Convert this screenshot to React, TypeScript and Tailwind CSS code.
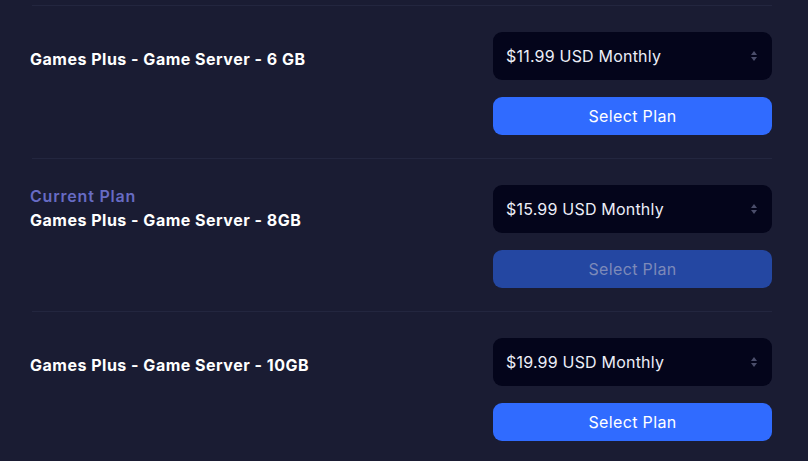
import React from 'react';

interface Plan {
  name: string;
  price: string;
  current?: boolean;
}

const plans: Plan[] = [
  { name: 'Games Plus - Game Server - 6 GB', price: '$11.99 USD Monthly' },
  { name: 'Games Plus - Game Server - 8GB', price: '$15.99 USD Monthly', current: true },
  { name: 'Games Plus - Game Server - 10GB', price: '$19.99 USD Monthly' },
];

function SortArrows() {
  return (
    <svg width="8" height="12" viewBox="0 0 8 12" className="shrink-0">
      <path d="M4 1 L7 5 L1 5 Z" fill="#4b4e6b" />
      <path d="M4 11 L7 7 L1 7 Z" fill="#4b4e6b" />
    </svg>
  );
}

function PlanRow({ plan }: { plan: Plan }) {
  return (
    <div className="flex justify-between border-t border-[#23263f] pt-[26px] pb-[23px]">
      <div className={plan.current ? '-ml-[2px] -mt-[1px] flex flex-col' : '-ml-[2px] mt-[15px] flex flex-col'}>
        {plan.current && (
          <p className="text-[16px] font-semibold leading-[24px] tracking-[0.8px] text-[#676bc4]">
            Current Plan
          </p>
        )}
        <p className="text-[16px] font-bold leading-[24px] tracking-[0.5px] text-white">{plan.name}</p>
      </div>
      <div className="flex w-[279px] flex-col gap-[17px]">
        <div className="flex h-[48px] items-center justify-between rounded-[9px] bg-[#04051b] pl-[13px] pr-[14px]">
          <span className="text-[16px] tracking-[0.2px] text-[#eceef8]">{plan.price}</span>
          <SortArrows />
        </div>
        <button
          type="button"
          disabled={plan.current}
          className={
            plan.current
              ? 'h-[38px] rounded-[9px] bg-[#2447a2] text-[16px] tracking-[0.35px] text-[#7d8ab9]'
              : 'h-[38px] rounded-[9px] bg-[#306bff] text-[16px] tracking-[0.35px] text-white'
          }
        >
          Select Plan
        </button>
      </div>
    </div>
  );
}

export default function App() {
  return (
    <div
      className="h-[461px] w-[808px] overflow-hidden bg-[#1a1c33] pt-[5px] pl-[32px] pr-[36px]"
      style={{ fontFamily: 'Inter, "Liberation Sans", sans-serif' }}
    >
      {plans.map((plan) => (
        <PlanRow key={plan.name} plan={plan} />
      ))}
    </div>
  );
}
